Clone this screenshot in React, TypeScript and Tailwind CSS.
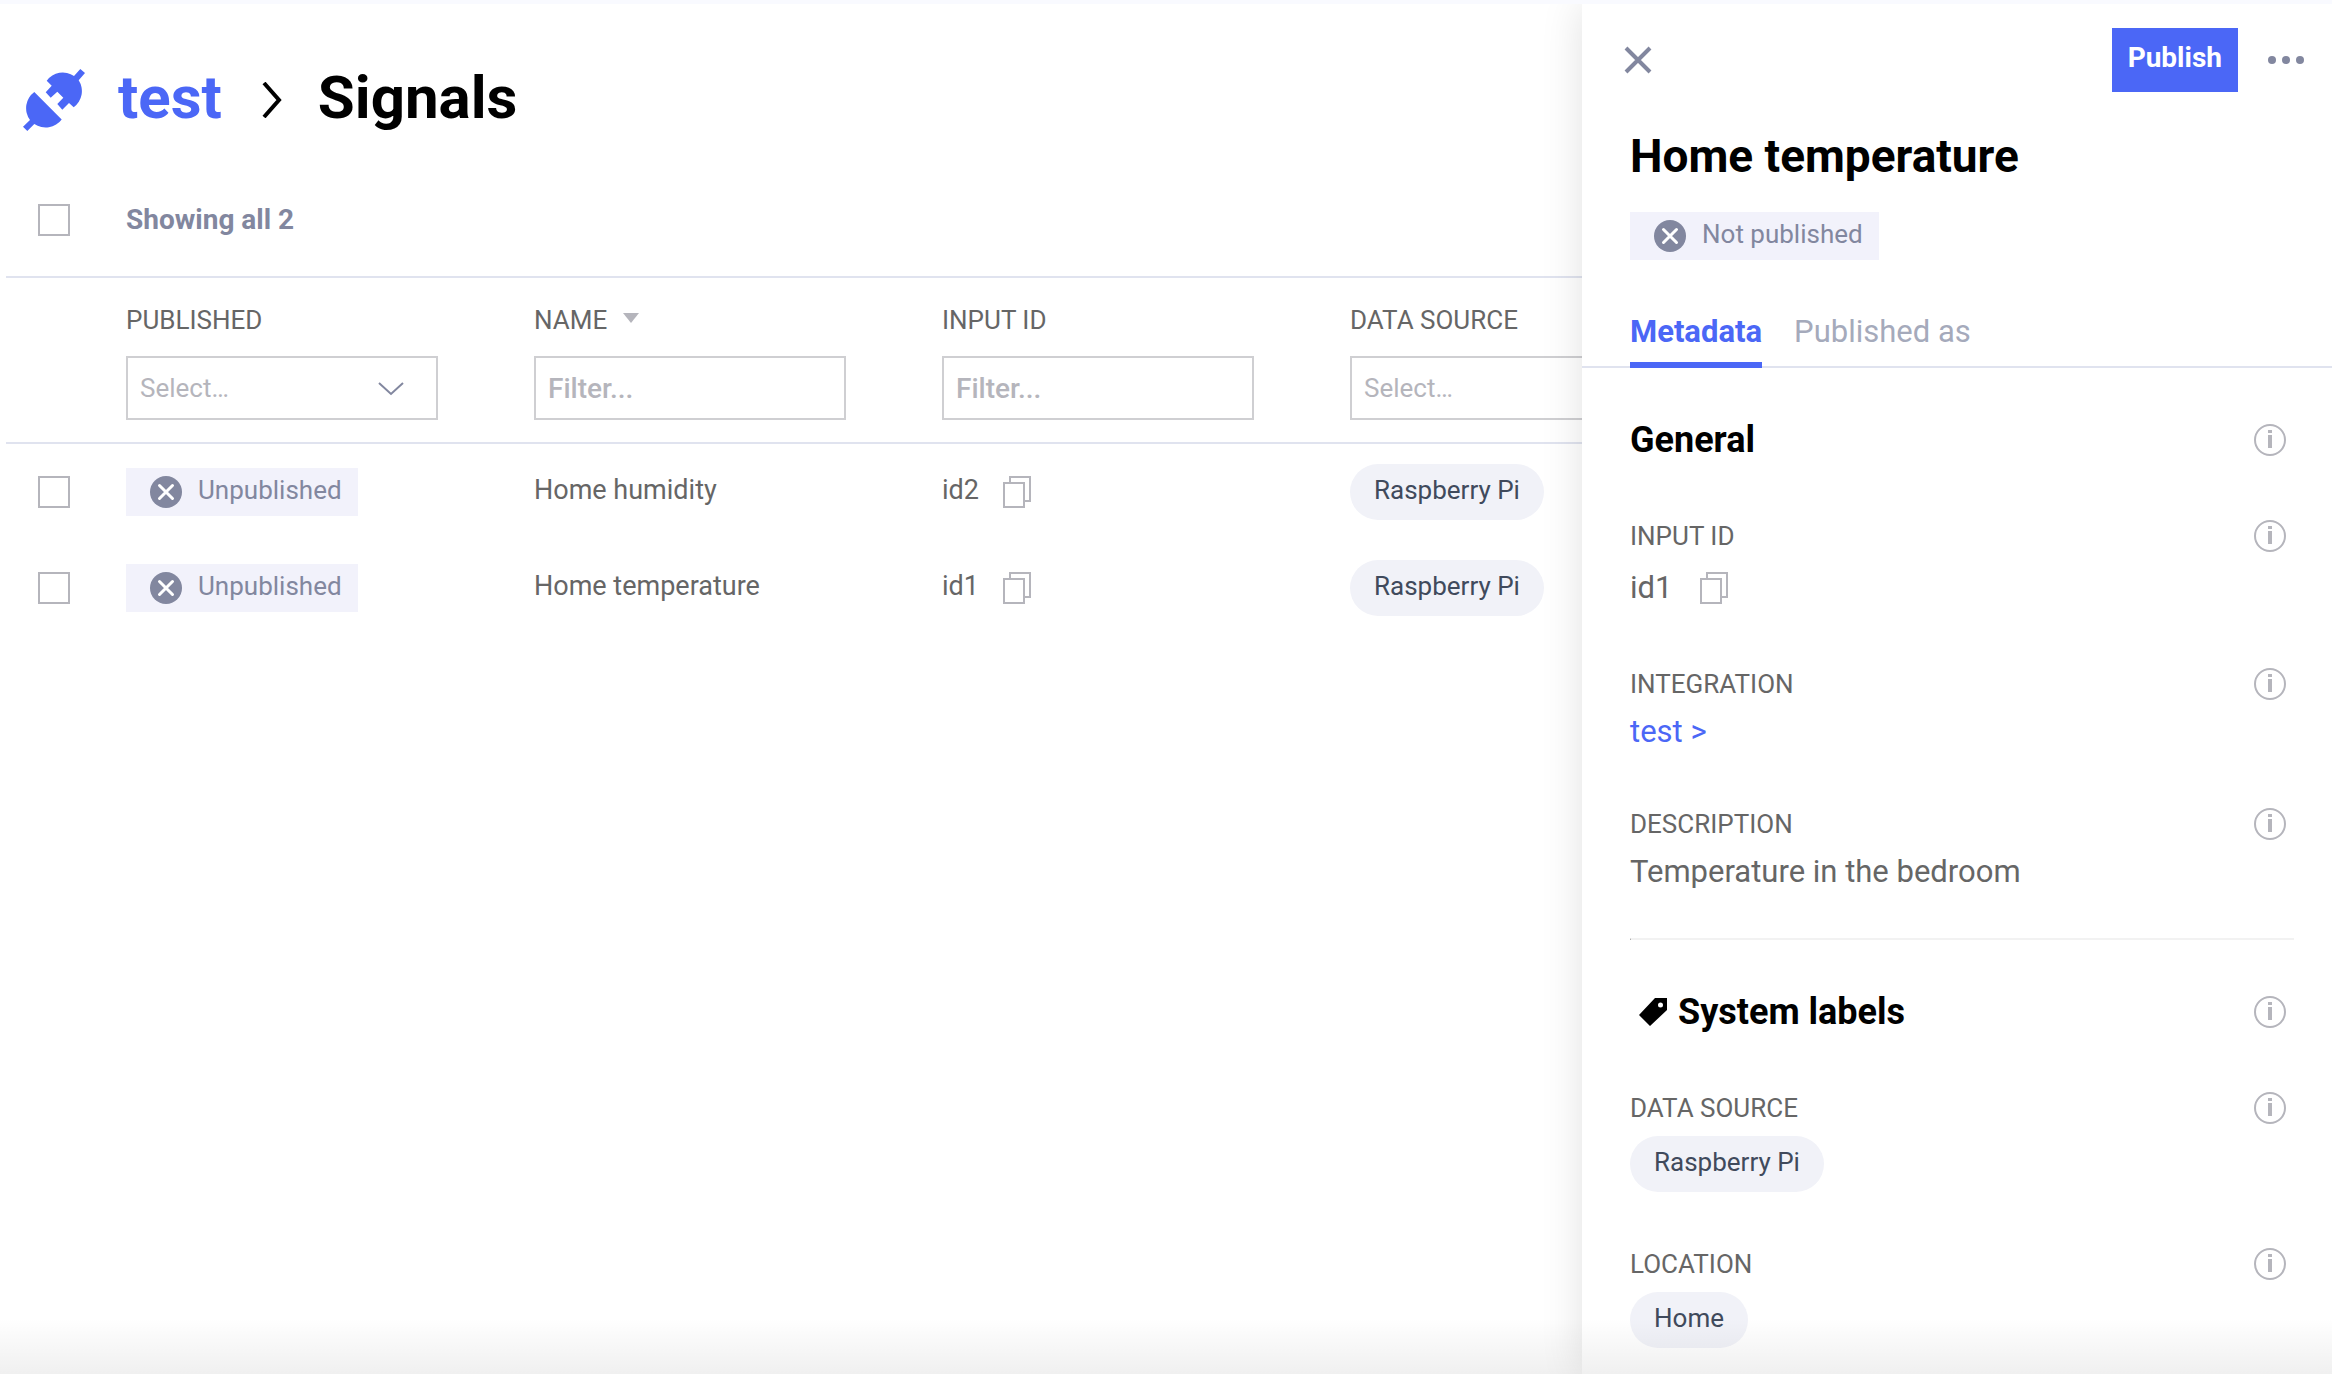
import React from "react";

const CheckBox = ({ label }: { label: string }) => (
  <input
    type="checkbox"
    aria-label={label}
    className="block h-8 w-8 appearance-none border-2 border-[#b5b5bc] bg-white checked:bg-[#4b67f6]"
  />
);

const CrossBadgeIcon = () => (
  <svg viewBox="0 0 32 32" className="h-8 w-8 shrink-0" aria-hidden="true">
    <circle cx="16" cy="16" r="16" fill="#82879f" />
    <path d="M9.5 9.5 L22.5 22.5 M22.5 9.5 L9.5 22.5" stroke="#fff" strokeWidth="3" strokeLinecap="round" fill="none" />
  </svg>
);

const StatusBadge = ({ children }: { children: string }) => (
  <span className="inline-flex h-12 items-center gap-4 bg-[#f2f2fb] pr-4 pl-6 text-[26px] leading-8 text-[#82879f]">
    <CrossBadgeIcon />
    <span className="pb-1">{children}</span>
  </span>
);

const CopyButton = () => (
  <button type="button" aria-label="Copy" className="block h-8 w-7 shrink-0">
    <svg viewBox="0 0 28 32" className="h-8 w-7" fill="none" stroke="#b5b5bc" strokeWidth="2" aria-hidden="true">
      <path d="M7 6 V1 H27 V25 H22" />
      <rect x="1" y="7" width="20" height="24" />
    </svg>
  </button>
);

const InfoButton = ({ about }: { about: string }) => (
  <button type="button" aria-label={`About ${about}`} className="block h-8 w-8 shrink-0">
    <svg viewBox="0 0 32 32" className="h-8 w-8" aria-hidden="true">
      <circle cx="16" cy="16" r="15" fill="none" stroke="#b5b5bc" strokeWidth="2" />
      <path d="M14 6h4v3h-4z M14 11h4v13h-4z" fill="#b5b5bc" />
    </svg>
  </button>
);

const Chip = ({ children }: { children: string }) => (
  <span className="inline-flex h-14 items-center rounded-full bg-[#f1f2f8] px-6 pb-1 text-[26px] leading-8 text-[#404a5c]">
    {children}
  </span>
);

const FilterInput = ({ label }: { label: string }) => (
  <input
    type="text"
    aria-label={label}
    placeholder="Filter..."
    className="block h-16 w-78 border-2 border-[#cfcfd2] bg-white px-3 text-[28px] font-medium text-[#666] placeholder:text-[#b5b5bc]"
  />
);

const FilterSelect = ({ label }: { label: string }) => (
  <div className="relative w-78">
    <select
      aria-label={label}
      className="block h-16 w-full appearance-none border-2 border-[#cfcfd2] bg-white px-3 text-[26px] text-[#b5b5bc]"
    >
      <option>Select…</option>
    </select>
    <svg
      viewBox="0 0 26 14"
      className="pointer-events-none absolute top-[26px] right-[34px] h-[14px] w-[26px]"
      fill="none"
      stroke="#82879f"
      strokeWidth="2"
      aria-hidden="true"
    >
      <path d="M1 1 L13 12 L25 1" />
    </svg>
  </div>
);

const rows = [
  { name: "Home humidity", id: "id2", source: "Raspberry Pi" },
  { name: "Home temperature", id: "id1", source: "Raspberry Pi" },
];

const Field = ({ label, className, children }: { label: string; className: string; children: React.ReactNode }) => (
  <section className={className}>
    <div className="flex items-center justify-between">
      <h3 className="text-[26px] leading-8 text-[#666] uppercase">{label}</h3>
      <InfoButton about={label} />
    </div>
    {children}
  </section>
);

export default function App() {
  return (
    <div className="relative flex min-h-screen overflow-hidden border-t-4 border-[#f9faff] bg-white font-[Roboto,sans-serif] text-[#666]">
      <main className="min-w-0 flex-1 pl-1.5">
        <header className="flex h-[188px] items-center pl-4">
          <svg viewBox="0 -2 64 68" className="h-[68px] w-16 shrink-0" fill="#4b67f6" aria-hidden="true">
            <path d="M12.3 26 L39.7 53.4 A20 20 0 0 1 12.3 58 L5.3 65 L1 60.7 L8 54 A20 20 0 0 1 12.3 26 Z" />
            <path d="M24.7 14.7 A20 20 0 0 1 52 10 L58.3 3 L63 7 L56.7 14.3 A20 20 0 0 1 51.7 41.3 L47 37 L40.3 43.7 L35.3 38 L41.3 31.7 L35.3 25.7 L28.7 31.7 L23.7 26.3 L29.7 19.7 Z" />
          </svg>
          <nav className="ml-8 flex items-center text-[60px] leading-16 font-bold">
            <a href="#test" className="text-[#4b67f6]">test</a>
            <svg viewBox="0 0 20 36" className="mt-1 mr-9 ml-10 h-9 w-5" fill="none" stroke="#000" strokeWidth="4" aria-hidden="true">
              <path d="M2 1 L17 18 L2 35" />
            </svg>
            <h1 className="text-black">Signals</h1>
          </nav>
        </header>
        <div className="flex h-[86px] items-start border-b-2 border-[#e0e3ef] pt-3 pl-8">
          <CheckBox label="Select all signals" />
          <p className="ml-14 text-[28px] leading-8 font-bold text-[#82879f]">Showing all 2</p>
        </div>
        <table className="w-[1752px] table-fixed border-separate border-spacing-0">
          <colgroup>
            <col className="w-30" />
            <col className="w-102" />
            <col className="w-102" />
            <col className="w-102" />
            <col className="w-102" />
          </colgroup>
          <thead>
            <tr>
              <td className="h-[166px] border-b-2 border-[#e0e3ef] p-0" />
              {["Published", "Name", "Input ID", "Data source"].map((title) => (
                <th
                  key={title}
                  scope="col"
                  className="h-[166px] border-b-2 border-[#e0e3ef] p-0 text-left align-top text-[26px] leading-8 font-normal text-[#666]"
                >
                  <div className="mt-[26px] mb-5 flex items-center gap-4">
                    <span className="uppercase">{title}</span>
                    {title === "Name" && (
                      <svg viewBox="0 0 16 10" className="mb-1 h-[10px] w-4" fill="#b5b5bc" aria-hidden="true">
                        <path d="M0 0h16L8 10z" />
                      </svg>
                    )}
                  </div>
                  {title === "Name" || title === "Input ID" ? <FilterInput label={title} /> : <FilterSelect label={title} />}
                </th>
              ))}
            </tr>
          </thead>
          <tbody className="text-[27px] leading-8">
            {rows.map((row) => (
              <tr key={row.id} className="h-24">
                <td className="py-0 pl-8">
                  <CheckBox label={`Select ${row.name}`} />
                </td>
                <td className="p-0">
                  <div className="flex">
                    <StatusBadge>Unpublished</StatusBadge>
                  </div>
                </td>
                <td className="p-0 pb-1">{row.name}</td>
                <td className="p-0">
                  <div className="flex items-center gap-6">
                    <span className="pb-1">{row.id}</span>
                    <CopyButton />
                  </div>
                </td>
                <td className="p-0">
                  <div className="flex">
                    <Chip>{row.source}</Chip>
                  </div>
                </td>
              </tr>
            ))}
          </tbody>
        </table>
      </main>

      <aside className="relative w-[750px] shrink-0 bg-white shadow-[0_0_40px_rgba(0,0,0,0.12)]">
        <div className="flex items-center pt-6 pr-7 pl-[42px]">
          <button type="button" aria-label="Close" className="block h-7 w-7">
            <svg viewBox="0 0 28 28" className="h-7 w-7" stroke="#82879f" strokeWidth="4" aria-hidden="true">
              <path d="M2 2 L26 26 M26 2 L2 26" />
            </svg>
          </button>
          <button type="button" className="ml-auto h-16 bg-[#4b67f6] px-4 pb-1 text-[28px] leading-8 font-bold text-white">
            Publish
          </button>
          <button type="button" aria-label="More actions" className="ml-[30px] block h-8 w-9">
            <svg viewBox="0 0 36 32" className="h-8 w-9" fill="#82879f" aria-hidden="true">
              <circle cx="4" cy="16" r="4" />
              <circle cx="18" cy="16" r="4" />
              <circle cx="32" cy="16" r="4" />
            </svg>
          </button>
        </div>
        <div className="px-12">
          <h2 className="mt-10 text-[46px] leading-12 font-bold text-black">Home temperature</h2>
          <div className="mt-8 flex">
            <StatusBadge>Not published</StatusBadge>
          </div>
        </div>
        <div role="tablist" className="mt-12 flex gap-8 border-b-2 border-[#e0e3ef] px-12 text-[31px] leading-12">
          <button role="tab" aria-selected="true" type="button" className="-mb-0.5 h-[60px] border-b-6 border-[#4b67f6] pb-1.5 font-bold text-[#4b67f6]">
            Metadata
          </button>
          <button role="tab" aria-selected="false" type="button" className="h-[54px] pb-1.5 text-[#a5aabb]">
            Published as
          </button>
        </div>

        <div className="pr-[46px] pl-12">
          <div className="mt-14 flex items-center justify-between">
            <h3 className="text-4xl leading-8 font-bold text-black">General</h3>
            <InfoButton about="General" />
          </div>
          <Field label="Input ID" className="mt-16">
            <div className="mt-5 flex items-center gap-7 text-[31px] leading-8">
              id1
              <CopyButton />
            </div>
          </Field>
          <Field label="Integration" className="mt-16">
            <a href="#integration" className="mt-4 block text-[31px] leading-8 text-[#4b67f6]">test &gt;</a>
          </Field>
          <Field label="Description" className="mt-15">
            <p className="mt-4 text-[31px] leading-8">Temperature in the bedroom</p>
          </Field>
          <hr className="mt-[50px] -mr-2 border-t-2 border-l border-t-[#f2f2f2] border-l-[#999]" />
          <div className="mt-14 flex items-center justify-between">
            <h3 className="flex items-center gap-2.5 pl-2 text-4xl leading-8 font-bold text-black">
              <svg viewBox="0 0 30 30" className="h-[30px] w-[30px]" aria-hidden="true">
                <path fillRule="evenodd" d="M17 1 H29 V13 L12 29 L1 18 Z M20 8 a2.5 2.5 0 1 0 5 0 a2.5 2.5 0 1 0 -5 0" />
              </svg>
              System labels
            </h3>
            <InfoButton about="System labels" />
          </div>
          <Field label="Data source" className="mt-16">
            <div className="mt-3 flex">
              <Chip>Raspberry Pi</Chip>
            </div>
          </Field>
          <Field label="Location" className="mt-14">
            <div className="mt-3 flex">
              <Chip>Home</Chip>
            </div>
          </Field>
        </div>
      </aside>
      <div aria-hidden="true" className="pointer-events-none absolute inset-x-0 bottom-0 h-14 bg-linear-to-b from-transparent to-black/6" />
    </div>
  );
}
